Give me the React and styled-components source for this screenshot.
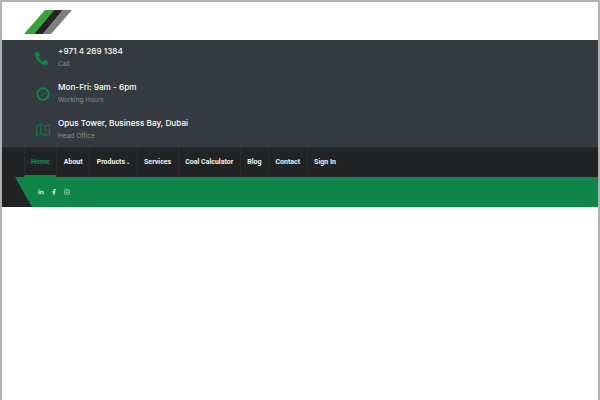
import styled, { createGlobalStyle } from "styled-components";
import { FaPhoneAlt, FaLinkedinIn, FaFacebookF, FaInstagram } from "react-icons/fa";
import { FiMap } from "react-icons/fi";

const GlobalStyle = createGlobalStyle`
  html, body {
    margin: 0;
    padding: 0;
    background: #fff;
  }
`;

const Frame = styled.div`
  width: 600px;
  height: 400px;
  box-sizing: border-box;
  border: 2px solid #b2b2b2;
  border-bottom: 0;
  overflow: hidden;
  background: #fff;
`;

const LogoBar = styled.div`
  height: 38px;
  padding-left: 22px;
  padding-top: 7px;
  box-sizing: border-box;
`;

const InfoPanel = styled.div`
  height: 107px;
  background: #353a40;
  padding-left: 32px;
  box-sizing: border-box;
  display: flex;
  flex-direction: column;
  padding-top: 4px;
  gap: 10px;
`;

const InfoRow = styled.div`
  display: flex;
  align-items: center;
  height: 26px;
`;

const IconSlot = styled.div`
  width: 24px;
  height: 14px;
  margin-top: 2px;
  display: flex;
  align-items: center;
  padding-left: 2px;
  box-sizing: border-box;
  color: #0f8549;
  font-size: ${(p) => p.$size || 13}px;
  opacity: ${(p) => p.$dim || 1};
`;

const InfoText = styled.div`
  font-family: Inter, "Open Sans", sans-serif;
`;

const InfoTitle = styled.div`
  color: #fff;
  font-size: 8.2px;
  line-height: 13px;
  font-weight: 500;
  white-space: nowrap;
`;

const InfoSub = styled.div`
  color: #8b8e92;
  font-size: 6.5px;
  line-height: 10px;
  margin-top: 1px;
`;

const NavBar = styled.nav`
  height: 30px;
  background: #222324;
  padding-left: 21.5px;
  display: flex;
`;

const NavItem = styled.div`
  height: 30px;
  box-sizing: border-box;
  padding: 0 6.5px;
  border-left: 1px solid #2c2d2e;
  border-bottom: 2px solid ${(p) => (p.$active ? "#0f8549" : "transparent")};
  color: ${(p) => (p.$active ? "#14924f" : "#f2f2f2")};
  font-family: Roboto, "Liberation Sans", sans-serif;
  font-size: 7px;
  font-weight: 700;
  line-height: 30px;
  white-space: nowrap;
`;

const Caret = styled.span`
  font-size: 5px;
  line-height: 0;
  margin-left: 1px;
`;

const SocialBar = styled.div`
  height: 30px;
  background: #222324;
`;

const SocialStrip = styled.div`
  height: 30px;
  margin-left: 13px;
  background: #0f8549;
  clip-path: polygon(0 0, 100% 0, 100% 100%, 17px 100%);
  padding-left: 23px;
  padding-bottom: 1px;
  box-sizing: border-box;
  display: flex;
  align-items: center;
  gap: 7px;
  color: #e6f2ec;
  font-size: 6px;
`;

const ClockIcon = () => (
  <svg width="14" height="14" viewBox="0 0 14 14" fill="none" stroke="currentColor">
    <circle cx="7" cy="7" r="5.7" strokeWidth="2" />
    <path d="M4.8 7.6 L6.6 8.4 L9 5.4" strokeWidth="1" />
  </svg>
);

const infos = [
  { icon: <FaPhoneAlt style={{ transform: "translateX(-1px)" }} />, title: "+971 4 269 1384", sub: "Call" },
  { icon: <ClockIcon />, title: "Mon-Fri: 9am - 6pm", sub: "Working Hours" },
  { icon: <FiMap />, title: "Opus Tower, Business Bay, Dubai", sub: "Head Office", dim: 0.7, size: 14 },
];

const links = ["Home", "About", "Products", "Services", "Coal Calculator", "Blog", "Contact", "Sign In"];

const Logo = () => (
  <svg width="50" height="26" viewBox="0 0 50 26">
    <polygon points="0,25 10,25 30,1 21,1" fill="#36a33d" />
    <polygon points="10,25 19,25 39,1 30,1" fill="#252324" />
    <polygon points="19,25 27,25 48,1 39,1" fill="#7f7d7c" />
  </svg>
);

const App = () => (
  <>
    <GlobalStyle />
    <Frame>
      <LogoBar>
        <Logo />
      </LogoBar>
      <InfoPanel>
        {infos.map((info) => (
          <InfoRow key={info.sub}>
            <IconSlot $dim={info.dim} $size={info.size}>{info.icon}</IconSlot>
            <InfoText>
              <InfoTitle>{info.title}</InfoTitle>
              <InfoSub>{info.sub}</InfoSub>
            </InfoText>
          </InfoRow>
        ))}
      </InfoPanel>
      <NavBar>
        {links.map((link) => (
          <NavItem key={link} $active={link === "Home"}>
            {link}
            {link === "Products" && <Caret>⌄</Caret>}
          </NavItem>
        ))}
      </NavBar>
      <SocialBar>
        <SocialStrip>
          <FaLinkedinIn />
          <FaFacebookF />
          <FaInstagram />
        </SocialStrip>
      </SocialBar>
    </Frame>
  </>
);

export default App;
